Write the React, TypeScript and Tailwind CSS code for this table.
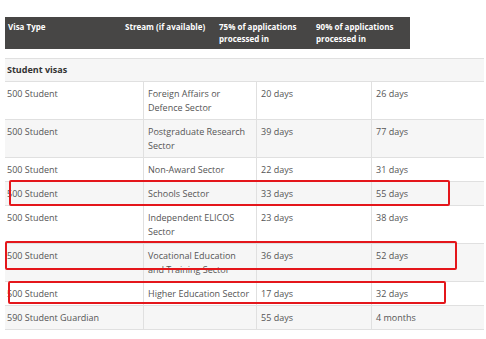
import React from "react";

type Row = { visa: string; stream: string; p75: string; p90: string; tall?: boolean };

const rows: Row[] = [
  { visa: "500 Student", stream: "Foreign Affairs or Defence Sector", p75: "20 days", p90: "26 days", tall: true },
  { visa: "500 Student", stream: "Postgraduate Research Sector", p75: "39 days", p90: "77 days", tall: true },
  { visa: "500 Student", stream: "Non-Award Sector", p75: "22 days", p90: "31 days" },
  { visa: "500 Student", stream: "Schools Sector", p75: "33 days", p90: "55 days" },
  { visa: "500 Student", stream: "Independent ELICOS Sector", p75: "23 days", p90: "38 days", tall: true },
  { visa: "500 Student", stream: "Vocational Education and Training Sector", p75: "36 days", p90: "52 days", tall: true },
  { visa: "500 Student", stream: "Higher Education Sector", p75: "17 days", p90: "32 days" },
  { visa: "590 Student Guardian", stream: "", p75: "55 days", p90: "4 months" },
];

const App = () => {
  return (
    <div className="relative w-[486px] h-[339px] overflow-hidden bg-white font-['Open_Sans',sans-serif]">
      {/* header bar */}
      <div className="ml-[5px] mt-[17px] w-[405px] h-[32px] bg-[#474645] text-white text-[8px] font-bold leading-[12px] flex pt-[4px] pl-[3px]">
        <div className="w-[117px]">Visa Type</div>
        <div className="w-[94px]">Stream (if available)</div>
        <div className="w-[97px]">
          75% of applications
          <br />
          processed in
        </div>
        <div>
          90% of applications
          <br />
          processed in
        </div>
      </div>

      {/* table body */}
      <div className="ml-[5px] mt-[9px] w-[479px] border-t border-[#e0e0e0] text-[9px] text-[#555] leading-[14px]">
        <div className="h-[23px] bg-[#f6f6f6] border-b border-[#e0e0e0] pl-[2px] pt-[4px] font-bold text-[#333]">
          Student visas
        </div>
        {rows.map((r, i) => (
          <div
            key={i}
            className={`grid grid-cols-[138px_113px_115px_1fr] border-b border-[#e0e0e0] ${
              r.tall ? "h-[38px]" : "h-[24px]"
            } ${i % 2 === 1 ? "bg-[#f6f6f6]" : "bg-white"}`}
          >
            <div className="pl-[2px] pt-[5px]">{r.visa}</div>
            <div className="border-l border-[#e0e0e0] pl-[4px] pt-[5px] pr-[4px]">{r.stream}</div>
            <div className="border-l border-[#e0e0e0] pl-[4px] pt-[5px]">{r.p75}</div>
            <div className="border-l border-[#e0e0e0] pl-[4px] pt-[5px]">{r.p90}</div>
          </div>
        ))}
      </div>

      {/* red highlight boxes */}
      <div className="absolute left-[9px] top-[180px] w-[441px] h-[26px] border-2 border-[#e4161b] rounded-[2px]" />
      <div className="absolute left-[5px] top-[241px] w-[452px] h-[29px] border-2 border-[#e4161b] rounded-[2px]" />
      <div className="absolute left-[8px] top-[281px] w-[438px] h-[23px] border-2 border-[#e4161b] rounded-[2px]" />
    </div>
  );
};

export default App;
